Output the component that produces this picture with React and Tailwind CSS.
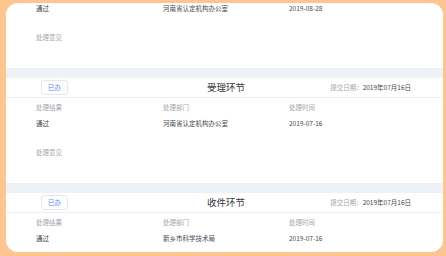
import React from "react";

const font = { fontFamily: '"Noto Sans CJK SC", "Noto Sans", sans-serif' };

function Cols({ a, b, c, muted }) {
  const cls = muted ? "text-[#a3a7ad]" : "text-[#45484d]";
  return (
    <div className={`flex h-[10px] items-center pl-[30px] text-[6.5px] leading-[10px] ${cls}`}>
      <div className="w-[127px]">{a}</div>
      <div className="w-[126px]">{b}</div>
      <div>{c}</div>
    </div>
  );
}

function Header({ title }) {
  return (
    <>
      <div className="h-[10px] bg-[#eef1f5]" />
      <div className="grid h-[20px] grid-cols-[1fr_auto_1fr] items-center border-b border-[#eceff3] pl-[35px] pr-[32px]">
        <div className="flex h-[15px] w-[27px] items-center justify-center rounded-[3px] border border-[#e4e8ee] text-[6.5px] text-[#5b8def]">
          已办
        </div>
        <div className="text-center text-[9.5px] text-[#34373c]">{title}</div>
        <div className="text-right text-[6.5px] text-[#45484d]">
          <span className="text-[#a3a7ad]">提交日期：</span>2019年07月16日
        </div>
      </div>
    </>
  );
}

function Opinion() {
  return (
    <div className="mt-[20px] flex h-[10px] items-center pl-[30px] text-[6.5px] text-[#a3a7ad]">
      处理意见
    </div>
  );
}

export default function App() {
  return (
    <div className="h-[256px] w-[446px] bg-[#ffc590] pb-[4px] pl-[6px] pr-[3px] pt-[3px]" style={font}>
      <div className="h-full w-full overflow-hidden rounded-[12px] bg-white">
        <Cols a="通过" b="河南省认定机构办公室" c="2019-08-28" />
        <Opinion />
        <div className="mt-[25px]" />
        <Header title="受理环节" />
        <div className="mt-[4px]" />
        <Cols a="处理结果" b="处理部门" c="处理时间" muted />
        <div className="mt-[6px]" />
        <Cols a="通过" b="河南省认定机构办公室" c="2019-07-16" />
        <Opinion />
        <div className="mt-[25px]" />
        <Header title="收件环节" />
        <div className="mt-[4px]" />
        <Cols a="处理结果" b="处理部门" c="处理时间" muted />
        <div className="mt-[6px]" />
        <Cols a="通过" b="新乡市科学技术局" c="2019-07-16" />
      </div>
    </div>
  );
}
